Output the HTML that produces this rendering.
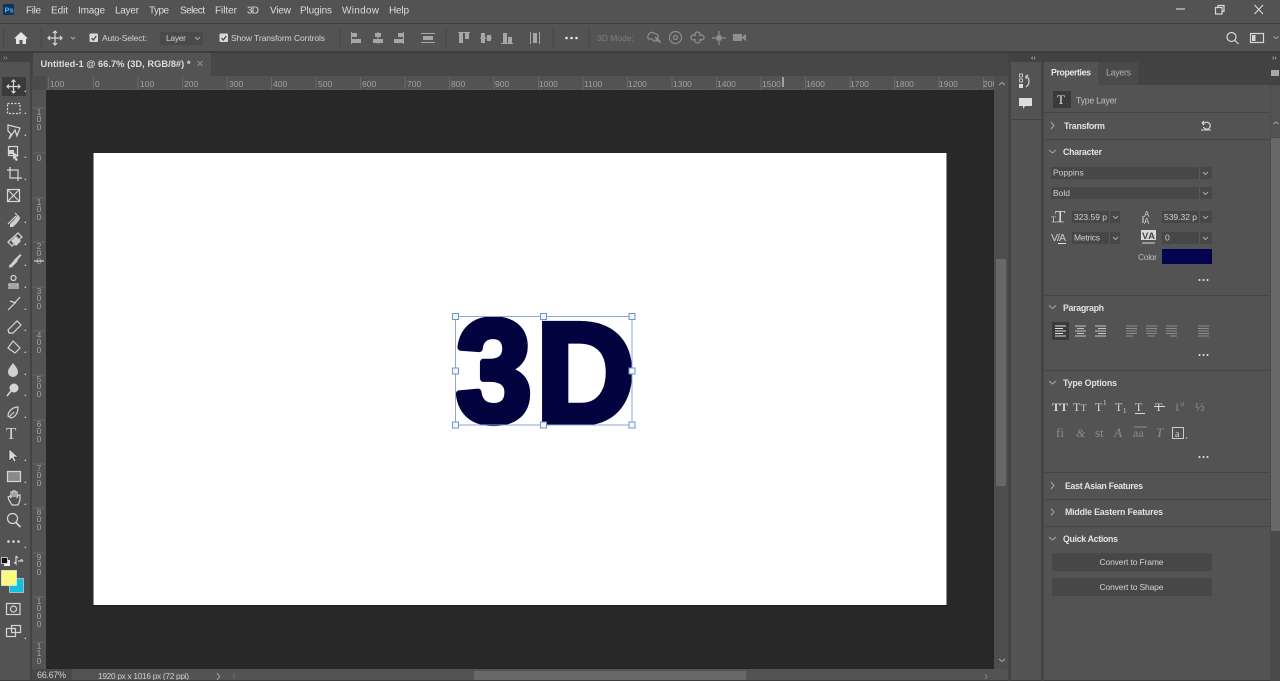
<!DOCTYPE html>
<html><head><meta charset="utf-8"><title>Photoshop</title>
<style>
html,body{margin:0;padding:0;background:#535353;width:1280px;height:681px;overflow:hidden}
svg{display:block;filter:blur(.3px)}
text{font-family:"Liberation Sans",sans-serif;font-size:10px;fill:#d0d0d0}
.m{font-size:10px;fill:#dcdcdc}
.o{font-size:8.5px;fill:#d2d2d2}
.r{font-size:8.5px;fill:#a2a2a2}
.v{font-size:8.5px;fill:#a2a2a2;text-anchor:middle}
.h{font-size:8.8px;font-weight:bold;fill:#e2e2e2}
.f{font-size:8.5px;fill:#d0d0d0}
.b{font-size:8.5px;fill:#d4d4d4;text-anchor:middle}
.i{fill:none;stroke:#d6d6d6;stroke-width:1.2}
.d{fill:none;stroke:#8f8f8f;stroke-width:1.2}
.c{fill:none;stroke:#a8a8a8;stroke-width:1}
.s{font-family:"Liberation Serif",serif;fill:#d6d6d6}
.g{font-family:"Liberation Serif",serif;fill:#8c8c8c}
</style></head><body>
<svg width="1280" height="681" viewBox="0 0 1280 681" xmlns="http://www.w3.org/2000/svg">
<rect width="1280" height="681" fill="#535353"/>
<!-- bars -->
<rect y="23" width="1280" height="1" fill="#3e3e3e"/>
<rect y="51" width="1280" height="2" fill="#3c3c3c"/>
<rect x="30" y="53" width="978" height="23" fill="#474747"/>
<rect y="53" width="33" height="9" fill="#424242"/>
<rect x="1008" y="53" width="272" height="9" fill="#424242"/>
<rect x="33" y="53" width="178" height="23" fill="#535353"/>
<rect x="30" y="53" width="2" height="628" fill="#434343"/>
<!-- menu -->
<rect x="3" y="4" width="11" height="11" rx="1" fill="#10335c"/>
<text x="4.500" y="12.500" style="font-size:7.500px;font-weight:bold;fill:#4fb2ff">Ps</text>
<text class="m" x="26" y="13.500" textLength="15">File</text>
<text class="m" x="51" y="13.500" textLength="17">Edit</text>
<text class="m" x="78" y="13.500" textLength="27">Image</text>
<text class="m" x="115" y="13.500" textLength="24">Layer</text>
<text class="m" x="149" y="13.500" textLength="20">Type</text>
<text class="m" x="180" y="13.500" textLength="25">Select</text>
<text class="m" x="215" y="13.500" textLength="22">Filter</text>
<text class="m" x="247" y="13.500" textLength="12">3D</text>
<text class="m" x="270" y="13.500" textLength="21">View</text>
<text class="m" x="300" y="13.500" textLength="32">Plugins</text>
<text class="m" x="342" y="13.500" textLength="37">Window</text>
<text class="m" x="389" y="13.500" textLength="20">Help</text>
<!-- window -->
<path d="M1176 9h9" stroke="#cfcfcf" stroke-width="1.200"/>
<rect x="1215.500" y="7.500" width="6.500" height="6.500" class="i"/><path d="M1218 7V5.500h6v6h-2" class="i"/>
<path d="M1254.500 5l8.500 9M1263 5l-8.500 9" stroke="#dcdcdc" stroke-width="1.100"/>
<!-- options -->
<path d="M3.500 28v19M41 28v19M340 28v19M446 28v19M553 28v19M589 28v19" stroke="#474747"/>
<path d="M14 38.500l7-6.500 7 6.500h-2v5.500h-3.500v-4h-3v4H16v-5.500z" fill="#e4e4e4"/>
<path d="M55 31v14M48 38h14M53 33l2-2 2 2M53 43l2 2 2-2M50 36l-2 2 2 2M60 36l2 2-2 2" class="i"/>
<path d="M71 37l2 2 2-2" class="c"/>
<rect x="89.500" y="33.500" width="8.500" height="8.500" rx="1" fill="#d8d8d8"/><path d="M91.500 38l1.800 2 3-4" fill="none" stroke="#444" stroke-width="1.200"/>
<text class="o" x="102" y="41" textLength="45">Auto-Select:</text>
<rect x="160" y="32" width="43" height="13" fill="#4a4a4a"/>
<text class="o" x="166" y="41" textLength="20">Layer</text>
<path d="M195 37l2.500 2.500 2.500-2.500" class="c"/>
<rect x="219.500" y="33.500" width="8.500" height="8.500" rx="1" fill="#d8d8d8"/><path d="M221.500 38l1.800 2 3-4" fill="none" stroke="#444" stroke-width="1.200"/>
<text class="o" x="231" y="41" textLength="94">Show Transform Controls</text>
<g fill="#a6a6a6">
<rect x="351" y="32" width="1" height="12"/><rect x="352" y="33" width="5" height="4"/><rect x="352" y="39" width="9" height="4"/>
<rect x="377.500" y="32" width="1" height="12"/><rect x="375" y="33" width="6" height="4"/><rect x="373" y="39" width="10" height="4"/>
<rect x="403" y="32" width="1" height="12"/><rect x="398" y="33" width="5" height="4"/><rect x="394" y="39" width="9" height="4"/>
<rect x="421" y="33" width="14" height="1"/><rect x="423" y="36" width="10" height="4"/><rect x="421" y="42" width="14" height="1"/>
<rect x="458" y="32" width="12" height="1"/><rect x="459" y="33" width="4" height="10"/><rect x="465" y="33" width="4" height="6"/>
<rect x="480" y="37.500" width="12" height="1"/><rect x="481" y="33" width="4" height="10"/><rect x="487" y="35" width="4" height="6"/>
<rect x="501" y="43" width="12" height="1"/><rect x="503" y="33" width="4" height="10"/><rect x="508" y="37" width="4" height="6"/>
<rect x="530" y="32" width="1" height="12"/><rect x="533" y="33" width="4" height="10"/><rect x="539" y="32" width="1" height="12"/>
</g>
<circle cx="566.500" cy="38" r="1.300" fill="#e6e6e6"/><circle cx="571.500" cy="38" r="1.300" fill="#e6e6e6"/><circle cx="576.500" cy="38" r="1.300" fill="#e6e6e6"/>
<text class="o" x="597" y="41" textLength="37" style="fill:#7e7e7e">3D Mode:</text>
<path d="M648 36a4 4 0 0 1 6-3l2 1 2 1v3l-2 1 2 2h-4l-2-2h-3a2 2 0 0 1-1-3z M655 37l5 4v2" class="d"/>
<circle cx="675.500" cy="37.500" r="6" class="d"/><circle cx="675.500" cy="37.500" r="2" class="d"/>
<path d="M697.500 32a2.500 2.500 0 0 1 2 4 2.500 2.500 0 1 1 0 3 2.500 2.500 0 1 1-4 0 2.500 2.500 0 1 1 0-3 2.500 2.500 0 0 1 2-4z" class="d"/>
<path d="M719 31v14M712 38h14" class="d"/><rect x="716.500" y="35.500" width="5" height="5" fill="#8f8f8f"/>
<rect x="733" y="34" width="9" height="7" fill="#8f8f8f"/><path d="M742 37l4-3v7l-4-3z" fill="#8f8f8f"/>
<circle cx="1231.500" cy="37" r="4.500" class="i"/><path d="M1235 40.500l3.500 3.500" class="i" stroke-width="1.600"/>
<rect x="1250.500" y="33.500" width="13" height="9" class="i"/><rect x="1252" y="35" width="3.500" height="6" fill="#d6d6d6"/>
<path d="M1273.500 36.500l2.500 2 2.500-2" class="c"/>
<!-- tab -->
<text x="40.500" y="67" textLength="150" style="font-size:9.300px;font-weight:bold;fill:#dcdcdc">Untitled-1 @ 66.7% (3D, RGB/8#) *</text>
<path d="M197.500 61l5 5M202.500 61l-5 5" stroke="#8e8e8e"/>
<!-- collapse marks -->
<text x="3" y="60" style="font-size:7px;fill:#aaa">››</text>
<text x="1031" y="60" style="font-size:7px;fill:#ccc">‹‹</text>
<text x="1272" y="60" style="font-size:7px;fill:#ccc">››</text>
<!-- rulers -->
<rect x="32" y="76" width="975" height="14" fill="#535353"/>
<rect x="32" y="76" width="14" height="14" fill="#4b4b4b"/>
<rect x="32" y="90" width="14" height="579" fill="#535353"/>
<path d="M48.500 77v12M93.500 77v12M138 77v12M182.500 77v12M227 77v12M271.500 77v12M316 77v12M360.500 77v12M405 77v12M449.500 77v12M494 77v12M538.500 77v12M583 77v12M627.500 77v12M672 77v12M716.500 77v12M761 77v12M805.500 77v12M850 77v12M894.500 77v12M939 77v12M983.500 77v12" stroke="#6a6a6a"/>
<path d="M33 108h12M33 153h12M33 198h12M33 242h12M33 287h12M33 331h12M33 375h12M33 420h12M33 464h12M33 508h12M33 553h12M33 597h12M33 642h12" stroke="#6a6a6a"/>
<path d="M46 89.500H994" stroke="#6a6a6a" stroke-dasharray="1 2"/>
<g>
<text class="r" x="50" y="87">100</text><text class="r" x="95" y="87">0</text><text class="r" x="140" y="87">100</text><text class="r" x="184" y="87">200</text><text class="r" x="229" y="87">300</text><text class="r" x="273" y="87">400</text><text class="r" x="318" y="87">500</text><text class="r" x="362" y="87">600</text><text class="r" x="407" y="87">700</text><text class="r" x="451" y="87">800</text><text class="r" x="495" y="87">900</text><text class="r" x="539" y="87">1000</text><text class="r" x="584" y="87">1100</text><text class="r" x="628" y="87">1200</text><text class="r" x="673" y="87">1300</text><text class="r" x="717" y="87">1400</text><text class="r" x="762" y="87">1500</text><text class="r" x="806" y="87">1600</text><text class="r" x="850" y="87">1700</text><text class="r" x="895" y="87">1800</text><text class="r" x="939" y="87">1900</text><text class="r" x="983" y="87">200</text>
</g>
<rect x="782.500" y="77" width="1" height="10" fill="#eee"/>
<g>
<text class="v" x="39" y="115">1</text><text class="v" x="39" y="122">0</text><text class="v" x="39" y="130">0</text>
<text class="v" x="39" y="161">0</text>
<text class="v" x="39" y="205">1</text><text class="v" x="39" y="212">0</text><text class="v" x="39" y="220">0</text>
<text class="v" x="39" y="249">2</text><text class="v" x="39" y="256">0</text><text class="v" x="39" y="264">0</text>
<text class="v" x="39" y="294">3</text><text class="v" x="39" y="301">0</text><text class="v" x="39" y="309">0</text>
<text class="v" x="39" y="338">4</text><text class="v" x="39" y="345">0</text><text class="v" x="39" y="353">0</text>
<text class="v" x="39" y="382">5</text><text class="v" x="39" y="389">0</text><text class="v" x="39" y="397">0</text>
<text class="v" x="39" y="427">6</text><text class="v" x="39" y="434">0</text><text class="v" x="39" y="442">0</text>
<text class="v" x="39" y="471">7</text><text class="v" x="39" y="478">0</text><text class="v" x="39" y="486">0</text>
<text class="v" x="39" y="515">8</text><text class="v" x="39" y="522">0</text><text class="v" x="39" y="530">0</text>
<text class="v" x="39" y="560">9</text><text class="v" x="39" y="567">0</text><text class="v" x="39" y="575">0</text>
<text class="v" x="39" y="604">1</text><text class="v" x="39" y="611">0</text><text class="v" x="39" y="619">0</text><text class="v" x="39" y="627">0</text>
<text class="v" x="39" y="649">1</text><text class="v" x="39" y="656">1</text><text class="v" x="39" y="664">0</text>
</g>
<rect x="34" y="260.500" width="10" height="1" fill="#eee"/>
<!-- canvas -->
<rect x="46" y="90" width="948" height="579" fill="#282828"/>
<rect x="93" y="153" width="854" height="453" fill="#1c1c1c"/>
<rect x="93.500" y="153" width="853" height="452" fill="#fff"/>
<text transform="translate(456,421) scale(.94,1)" x="0" y="0" style="font-size:145px;font-weight:bold;fill:#03033f;stroke:#03033f;stroke-width:7;stroke-linejoin:round">3</text>
<text transform="translate(536.300,422) scale(.958,1)" x="0" y="0" style="font-size:142px;font-weight:bold;fill:#03033f;stroke:#03033f;stroke-width:7;stroke-linejoin:miter">D</text>
<rect x="455.500" y="316.500" width="176.500" height="108.500" fill="none" stroke="#8ea6d8" stroke-width="1"/>
<g fill="#f4f7fc" stroke="#6f93cf">
<rect x="452.500" y="313.500" width="6" height="6"/><rect x="540.500" y="313.500" width="6" height="6"/><rect x="629" y="313.500" width="6" height="6"/>
<rect x="452.500" y="368" width="6" height="6"/><rect x="629" y="368" width="6" height="6"/>
<rect x="452.500" y="422" width="6" height="6"/><rect x="540.500" y="422" width="6" height="6"/><rect x="629" y="422" width="6" height="6"/>
</g>
<!-- scrollbars -->
<rect x="994" y="76" width="14" height="605" fill="#4e4e4e"/>
<rect x="996" y="259" width="10" height="227" fill="#686868"/>
<path d="M999 85l3-2.500 3 2.500M999 659l3 2.500 3-2.500" class="c"/>
<rect x="32" y="669" width="976" height="12" fill="#535353"/>
<rect x="32" y="669" width="40" height="12" fill="#484848"/>
<text x="37" y="678" textLength="29" style="font-size:9px;fill:#d0d0d0">66.67%</text>
<text x="98" y="679" textLength="91" style="font-size:8.300px;fill:#cfcfcf">1920 px x 1016 px (72 ppi)</text>
<path d="M217 673l2.500 3.500-2.500 3.500" class="c"/>
<path d="M235 674l-2 2.500 2 2.500" stroke="#6d6d6d" fill="none"/>
<rect x="474" y="671" width="272" height="9" fill="#686868"/>
<path d="M985 674l2 2.500-2 2.500" stroke="#8a8a8a" fill="none"/>
<rect y="680" width="1280" height="1" fill="#3c3c3c"/>
<!-- left tools -->
<rect x="2" y="77" width="24" height="19" fill="#3a3a3a"/>
<g class="i">
<path d="M13.500 80v13M7 86.500h13M11.500 82l2-2 2 2M11.500 91l2 2 2-2M9 84.500l-2 2 2 2M18 84.500l2 2-2 2"/>
<rect x="7.500" y="103.500" width="12.500" height="10" stroke-dasharray="2 1.500"/>
<path d="M8 125l12 3-3 8-2-6-6 9 2-5-3-3z"/>
<rect x="8.500" y="146.500" width="9" height="9"/>
<path d="M10 167v11h12M7 170h11v11"/>
<rect x="7.500" y="189.500" width="12" height="12"/><path d="M7.500 189.500l12 12M19.500 189.500l-12 12"/>
<path d="M8 224l8-8M15 213l5 5"/>
<path d="M8 242l10-9 4 4-10 9z"/>
<path d="M9 266l4-2 8-9"/>
<circle cx="13.500" cy="278" r="2.500"/><path d="M9 284h9v2H9zM8 288h11"/>
<path d="M8 310l5-5 7-8M10 301l6 2"/>
<path d="M8 330l9-9 4 4-8 8H9z"/>
<path d="M13 341l7 7-5 5-7-5z"/>
<path d="M8 416c0-5 5-9 10-9 0 5-2 10-7 11zM9 417l5-5"/>
<rect x="7.500" y="471.500" width="13" height="10" fill="#8a8a8a"/>
<path d="M9 500l-1-3 2-1 1 2v-6h2v5-6h2v6-5h2v6l1-3h2v5l-2 5h-6z"/>
<circle cx="12.500" cy="518.500" r="5"/><path d="M16 522.500l4.500 4.500" stroke-width="1.600"/>
<rect x="6.500" y="603.500" width="13.500" height="11"/><circle cx="13.500" cy="609" r="3"/>
<rect x="6.500" y="628.500" width="9" height="8"/><rect x="11.500" y="625.500" width="9" height="7"/>
<path d="M16 556v8l-2-2M16 556l2 2M23 561h-5M23 561l-2-2"/>
</g>
<path d="M13 152l6 4-3 1 2 3-2 1-2-3-1 2z M9 150h5v4H9z" fill="#d6d6d6"/>
<path d="M13 365c3 4 5 6 5 9a5 5 0 1 1-10 0c0-3 2-5 5-9z" fill="#d0d0d0" transform="translate(0,-2)"/>
<circle cx="14" cy="388" r="4.500" fill="#d6d6d6"/><path d="M11 391l-4 5" stroke="#d6d6d6" stroke-width="1.600"/>
<path d="M9 449l9 8-4 0 2 4-2 1-2-4-3 3z" fill="#d6d6d6" stroke="#222" stroke-width=".5"/>
<text class="s" x="6" y="439" style="font-size:17px">T</text>
<path d="M17 216l3 3-3 4-4 4h-3v-3l4-4z" fill="#cfcfcf"/>
<path d="M11 241l5-5 5 5-5 5z M15 259l6-6-4 9-5 5-3 1 1-3z" fill="#d0d0d0"/>
<circle cx="8.500" cy="541.500" r="1.300" fill="#ddd"/><circle cx="13.500" cy="541.500" r="1.300" fill="#ddd"/><circle cx="18.500" cy="541.500" r="1.300" fill="#ddd"/>
<rect x="4" y="560" width="6" height="6" fill="#eee"/><rect x="1.500" y="557.500" width="6" height="6" fill="#111" stroke="#eee" stroke-width=".7"/>
<rect x="9.500" y="578.500" width="14" height="14" fill="#12c0e2" stroke="#e8e8e8" stroke-width=".6"/>
<rect x="1.500" y="570.500" width="15" height="15" fill="#fbfb82" stroke="#e8e8e8" stroke-width=".8"/>
<g fill="#c4c4c4">
<path d="M24 92h2v-2zM24 114h2v-2zM24 136h2v-2zM24 158h2v-2zM24 180h2v-2zM24 223h2v-2zM24 245h2v-2zM24 266h2v-2zM24 288h2v-2zM24 310h2v-2zM24 331h2v-2zM24 353h2v-2zM24 375h2v-2zM24 396h2v-2zM24 418h2v-2zM24 461h2v-2zM24 483h2v-2zM24 505h2v-2zM24 548h2v-2zM24 639h2v-2z"/>
</g>
<!-- right dock -->
<rect x="1008" y="62" width="3" height="619" fill="#444"/>
<rect x="1041" y="62" width="3" height="619" fill="#444"/>
<rect x="1011" y="119" width="30" height="1" fill="#434343"/>
<rect x="1019.500" y="74" width="3" height="3" fill="none" stroke="#ddd" stroke-width=".8"/><rect x="1019.500" y="79" width="3" height="3" fill="none" stroke="#ddd" stroke-width=".8"/><rect x="1019" y="84" width="4" height="4" fill="#ddd"/>
<path d="M1026 76c4 2 4 8 0 11M1026 76l2-1M1026 76v3" class="i"/>
<path d="M1019 98h13v8h-7l-2 3v-3h-4z" fill="#dedede"/>
<!-- properties -->
<rect x="1044" y="62" width="236" height="23" fill="#434343"/>
<rect x="1098" y="62" width="40" height="23" fill="#4a4a4a"/>
<rect x="1044" y="62" width="54" height="23" fill="#535353"/>
<text x="1051" y="75.500" textLength="40" class="h" style="fill:#e8e8e8">Properties</text>
<text x="1106" y="75.500" textLength="25" class="h" style="font-weight:normal;fill:#b0b0b0">Layers</text>
<rect x="1271" y="70" width="8" height="6" fill="#a8a8a8"/>
<rect x="1053" y="91" width="18" height="17" fill="#3a3a3a"/>
<text class="s" x="1057" y="104" style="font-size:13px;fill:#e4e4e4">T</text>
<text x="1076" y="103.500" textLength="41" style="font-size:8.800px;fill:#bdbdbd">Type Layer</text>
<rect x="1044" y="112" width="226" height="1" fill="#464646"/>
<rect x="1044" y="139" width="226" height="1" fill="#464646"/>
<rect x="1044" y="295" width="226" height="1" fill="#464646"/>
<rect x="1044" y="370" width="226" height="1" fill="#464646"/>
<rect x="1044" y="472" width="226" height="1" fill="#464646"/>
<rect x="1044" y="499" width="226" height="1" fill="#464646"/>
<rect x="1044" y="526" width="226" height="1" fill="#464646"/>
<path d="M1051 122l3 3.500-3 3.500M1051 482l3 3.500-3 3.500M1051 508.500l3 3.500-3 3.500" class="c"/>
<path d="M1049 150l3.500 3 3.500-3M1049 305.500l3.500 3 3.500-3M1049 381l3.500 3 3.500-3M1049 537l3.500 3 3.500-3" class="c"/>
<text class="h" x="1064" y="129" textLength="41">Transform</text>
<text class="h" x="1063" y="155" textLength="39">Character</text>
<text class="h" x="1063" y="311" textLength="41">Paragraph</text>
<text class="h" x="1063" y="386" textLength="54">Type Options</text>
<text class="h" x="1065" y="489" textLength="78">East Asian Features</text>
<text class="h" x="1065" y="515" textLength="98">Middle Eastern Features</text>
<text class="h" x="1063" y="542" textLength="55">Quick Actions</text>
<path d="M1202 123h2.500a3.500 3.500 0 1 1-1 4M1202 123l2-2M1202 123l2 2" class="i"/><path d="M1201 130h10" stroke="#d6d6d6"/>
<!-- fields -->
<g fill="#474747">
<rect x="1051" y="167" width="161" height="12"/><rect x="1051" y="187" width="161" height="12"/>
<rect x="1072" y="211" width="48" height="12"/><rect x="1162" y="211" width="50" height="12"/>
<rect x="1072" y="232" width="48" height="12"/><rect x="1162" y="232" width="50" height="12"/>
<rect x="1052" y="553" width="160" height="18"/><rect x="1052" y="578" width="160" height="18"/>
</g>
<path d="M1199.500 167v12M1199.500 187v12M1199.500 211v12M1199.500 232v12M1109.500 211v12M1109.500 232v12" stroke="#585858"/>
<path d="M1203 172l2.500 2.500 2.500-2.500M1203 192l2.500 2.500 2.500-2.500M1203 216l2.500 2.500 2.500-2.500M1203 237l2.500 2.500 2.500-2.500M1113 216l2.500 2.500 2.500-2.500M1113 237l2.500 2.500 2.500-2.500" class="c"/>
<text class="f" x="1053" y="175.500">Poppins</text>
<text class="f" x="1053" y="196">Bold</text>
<text class="f" x="1074" y="220" textLength="33">323.59 p</text>
<text class="f" x="1164" y="220" textLength="33">539.32 p</text>
<text class="f" x="1074" y="240.500" textLength="26">Metrics</text>
<text class="f" x="1165" y="240.500">0</text>
<text x="1138" y="260" textLength="19" style="font-size:8.500px;fill:#bdbdbd">Color</text>
<rect x="1162" y="249" width="50" height="15" fill="#03034f"/>
<text class="s" x="1055" y="222" style="font-size:17px">T</text><text class="s" x="1051" y="222" style="font-size:8px">T</text>
<path d="M1052 222h12" stroke="#d6d6d6" stroke-width=".6"/>
<text x="1144" y="217" style="font-size:8px;fill:#d0d0d0">A</text><text x="1144" y="224" style="font-size:8px;fill:#d0d0d0">A</text>
<path d="M1143 216v7" stroke="#ddd"/>
<text x="1051" y="241" textLength="15" style="font-size:10.500px;fill:#d0d0d0">V/A</text><path d="M1058 243.500h8" stroke="#ddd"/>
<rect x="1141" y="230" width="15" height="10" fill="#dadada"/><text x="1142" y="239" textLength="13" style="font-size:9.500px;font-weight:bold;fill:#444">VA</text><path d="M1142 243h13" stroke="#ddd"/>
<!-- dots -->
<g fill="#e4e4e4">
<circle cx="1199.500" cy="280" r="1"/><circle cx="1203.500" cy="280" r="1"/><circle cx="1207.500" cy="280" r="1"/>
<circle cx="1199.500" cy="355" r="1"/><circle cx="1203.500" cy="355" r="1"/><circle cx="1207.500" cy="355" r="1"/>
<circle cx="1199.500" cy="457" r="1"/><circle cx="1203.500" cy="457" r="1"/><circle cx="1207.500" cy="457" r="1"/>
</g>
<!-- paragraph -->
<rect x="1052" y="322" width="17" height="18" fill="#3a3a3a"/>
<path d="M1055 326h11M1055 328.500h8M1055 331h11M1055 333.500h8M1055 336h11" stroke="#e0e0e0"/>
<path d="M1075 326h11M1077 328.500h7M1075 331h11M1077 333.500h7M1075 336h11" stroke="#c6c6c6"/>
<path d="M1095 326h11M1098 328.500h8M1095 331h11M1098 333.500h8M1095 336h11" stroke="#c6c6c6"/>
<path d="M1126 326h11M1126 328.500h11M1126 331h11M1126 333.500h11M1126 336h7M1146 326h11M1146 328.500h11M1146 331h11M1146 333.500h11M1148 336h7M1166 326h11M1166 328.500h11M1166 331h11M1166 333.500h11M1170 336h7M1198 326h11M1198 328.500h11M1198 331h11M1198 333.500h11M1198 336h11" stroke="#8c8c8c"/>
<!-- type options -->
<text class="s" x="1052" y="411" textLength="16" style="font-size:12px;font-weight:bold">TT</text>
<text class="s" x="1073" y="411" style="font-size:12px">T</text><text class="s" x="1081" y="411" style="font-size:9px">T</text>
<text class="s" x="1095" y="411" style="font-size:12px">T</text><text class="s" x="1103" y="405" style="font-size:7px">1</text>
<text class="s" x="1115" y="411" style="font-size:12px">T</text><text class="s" x="1123" y="413" style="font-size:7px">1</text>
<text class="s" x="1135" y="411" style="font-size:12px">T</text><path d="M1135 413.500h10" stroke="#d6d6d6"/>
<text class="s" x="1155" y="411" style="font-size:12px">T</text><path d="M1154 406.500h11" stroke="#d6d6d6"/>
<text class="g" x="1174" y="411" style="font-size:12px">1</text><text class="g" x="1180" y="406" style="font-size:7px">st</text>
<text class="g" x="1195" y="411" style="font-size:13px">½</text>
<text class="g" x="1056" y="437" style="font-size:13px">fi</text>
<text class="g" x="1076" y="437" style="font-size:12px;font-style:italic">&amp;</text>
<text class="g" x="1095" y="437" style="font-size:13px">st</text>
<text class="g" x="1114" y="437" style="font-size:13px;font-style:italic">A</text>
<text class="g" x="1133" y="437" style="font-size:12px">aa</text><path d="M1134 427h13" stroke="#8c8c8c"/>
<text class="g" x="1156" y="437" style="font-size:13px;font-style:italic">T</text>
<rect x="1172.500" y="427.500" width="11" height="11" fill="none" stroke="#ccc"/><text class="s" x="1175" y="437" style="font-size:10px">a</text>
<circle cx="1186.500" cy="438" r=".7" fill="#ccc"/>
<!-- buttons -->
<text class="b" x="1131.500" y="565" textLength="64">Convert to Frame</text>
<text class="b" x="1131.500" y="590" textLength="64">Convert to Shape</text>
<!-- panel scroller -->
<rect x="1270" y="85" width="10" height="596" fill="#4a4a4a"/>
<rect x="1271" y="86" width="9" height="51" fill="#535353"/>
<rect x="1271" y="138" width="9" height="393" fill="#686868"/>
<path d="M1273.500 124l2.500-2 2.500 2" class="c"/>
</svg>
</body></html>
